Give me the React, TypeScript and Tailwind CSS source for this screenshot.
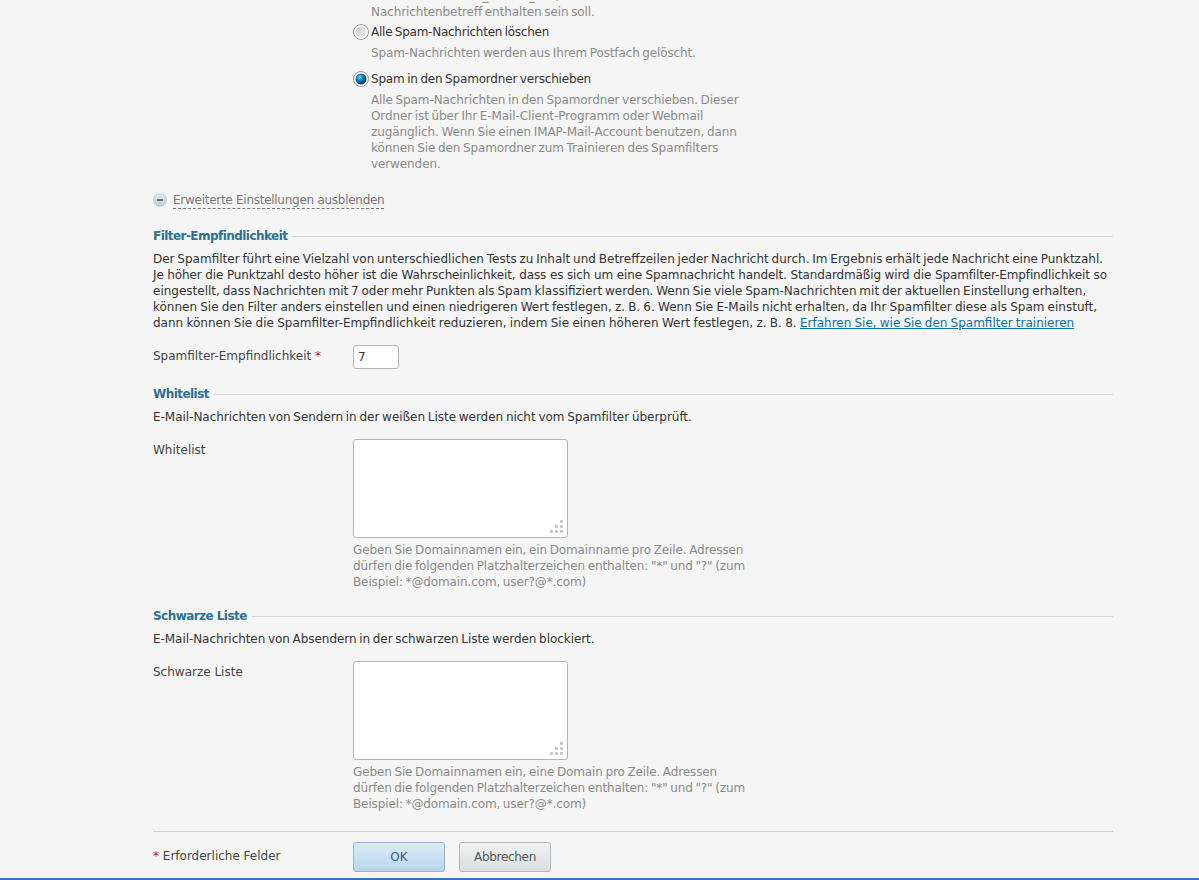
const font = { fontFamily: '"DejaVu Sans", sans-serif' };

function SectionTitle({ title }: { title: string }) {
  return (
    <div className="flex items-center gap-[5px] h-4">
      <span className="font-bold text-[#2f6f8f] tracking-[-0.55px]">{title}</span>
      <div className="flex-1 h-px bg-[#d8d8d8]" />
    </div>
  );
}

function ResizeGrip() {
  return (
    <svg className="absolute right-[2px] bottom-[2px]" width="16" height="16" viewBox="0 0 16 16" fill="#c4c4c4">
      <rect x="11" y="1" width="3" height="3" rx="1" />
      <rect x="6" y="6" width="3" height="3" rx="1" />
      <rect x="11" y="6" width="3" height="3" rx="1" />
      <rect x="1" y="11" width="3" height="3" rx="1" />
      <rect x="6" y="11" width="3" height="3" rx="1" />
      <rect x="11" y="11" width="3" height="3" rx="1" />
    </svg>
  );
}

function RadioIcon({ checked }: { checked: boolean }) {
  return (
    <svg className="mr-[2px] shrink-0" width="16" height="16" viewBox="0 0 16 16">
      <defs>
        <linearGradient id="radio-off" x1="0" y1="0" x2="1" y2="1">
          <stop offset="0" stopColor="#c9c9c9" />
          <stop offset="1" stopColor="#f4f4f4" />
        </linearGradient>
        <radialGradient id="radio-on" cx="0.4" cy="0.35" r="0.7">
          <stop offset="0" stopColor="#7fd0f5" />
          <stop offset="0.45" stopColor="#0f79b5" />
          <stop offset="1" stopColor="#06304d" />
        </radialGradient>
      </defs>
      <circle cx="8" cy="8" r="7.5" fill="#fff" stroke="#9a9a9a" />
      {checked ? <circle cx="8" cy="8" r="5.5" fill="url(#radio-on)" /> : <circle cx="8" cy="8" r="5.5" fill="url(#radio-off)" />}
    </svg>
  );
}

function ListField({ label, hint }: { label: string; hint: React.ReactNode }) {
  return (
    <div className="flex mt-[14px]">
      <div className="w-[200px] pt-[3px] text-[#444]">{label}</div>
      <div>
        <div className="relative w-[215px] h-[99px] bg-white border border-[#b5b5b5] rounded-[3px]">
          <ResizeGrip />
        </div>
        <p className="mt-[4px] text-[#8a8a8a] whitespace-nowrap tracking-[-0.12px] [word-spacing:-1px]">{hint}</p>
      </div>
    </div>
  );
}

export default function App() {
  return (
    <div style={font} className="h-[880px] overflow-hidden bg-[#f5f5f5] text-xs leading-4 text-[#333] flex flex-col">
      <div className="flex-1 min-h-0 pl-[153px] pr-[86px] pt-[4px]">
        <div className="pl-[200px]">
          <p className="pl-[18px] -mt-[16px] text-[#8a8a8a] whitespace-nowrap tracking-[-0.1px] [word-spacing:-1px]">
            Makros: Geben Sie _SCORE_ ein, wenn die Punktzahl im<br />
            Nachrichtenbetreff enthalten sein soll.
          </p>

          <label className="flex items-center h-4 mt-[4px]">
            <RadioIcon checked={false} />
            <span className="tracking-[-0.25px] [word-spacing:-1px]">Alle Spam-Nachrichten löschen</span>
          </label>
          <p className="pl-[18px] mt-[5px] text-[#8a8a8a] tracking-[-0.13px] [word-spacing:-1px]">Spam-Nachrichten werden aus Ihrem Postfach gelöscht.</p>

          <label className="flex items-center h-4 mt-[10px]">
            <RadioIcon checked />
            <span className="tracking-[-0.18px] [word-spacing:-1px]">Spam in den Spamordner verschieben</span>
          </label>
          <p className="pl-[18px] mt-[5px] text-[#8a8a8a] whitespace-nowrap tracking-[-0.1px] [word-spacing:-1px]">
            Alle Spam-Nachrichten in den Spamordner verschieben. Dieser<br />
            Ordner ist über Ihr E-Mail-Client-Programm oder Webmail<br />
            zugänglich. Wenn Sie einen IMAP-Mail-Account benutzen, dann<br />
            können Sie den Spamordner zum Trainieren des Spamfilters<br />
            verwenden.
          </p>
        </div>

        <div className="flex items-center mt-[20px] h-4">
          <svg className="mr-[6px] shrink-0" width="14" height="14" viewBox="0 0 14 14">
            <defs>
              <linearGradient id="toggle-fill" x1="0" y1="0" x2="0" y2="1">
                <stop offset="0" stopColor="#e4ebef" />
                <stop offset="1" stopColor="#bccad3" />
              </linearGradient>
            </defs>
            <circle cx="7" cy="7" r="6.5" fill="url(#toggle-fill)" stroke="#c3ced5" />
            <rect x="4" y="6" width="6" height="2" fill="#5f6f7a" />
          </svg>
          <span className="text-[#777] border-b border-dashed border-[#777] tracking-[-0.27px]">Erweiterte Einstellungen ausblenden</span>
        </div>

        <div className="mt-[20px]">
          <SectionTitle title="Filter-Empfindlichkeit" />
        </div>
        <p className="mt-[7px] whitespace-nowrap">
          <span className="[word-spacing:-1px]">Der Spamfilter führt eine Vielzahl von unterschiedlichen Tests zu Inhalt und Betreffzeilen jeder Nachricht durch. Im Ergebnis erhält jede Nachricht eine Punktzahl.</span><br />
          <span className="tracking-[-0.125px]">Je höher die Punktzahl desto höher ist die Wahrscheinlichkeit, dass es sich um eine Spamnachricht handelt. Standardmäßig wird die Spamfilter-Empfindlichkeit so</span><br />
          <span className="[word-spacing:-1px]">eingestellt, dass Nachrichten mit 7 oder mehr Punkten als Spam klassifiziert werden. Wenn Sie viele Spam-Nachrichten mit der aktuellen Einstellung erhalten,</span><br />
          <span className="[word-spacing:-0.65px]">können Sie den Filter anders einstellen und einen niedrigeren Wert festlegen, z. B. 6. Wenn Sie E-Mails nicht erhalten, da Ihr Spamfilter diese als Spam einstuft,</span><br />
          <span className="[word-spacing:-0.5px]">dann können Sie die Spamfilter-Empfindlichkeit reduzieren, indem Sie einen höheren Wert festlegen, z. B. 8. </span>
          <a className="text-[#0f6fa8] underline [word-spacing:-0.7px]">Erfahren Sie, wie Sie den Spamfilter trainieren</a>
        </p>

        <div className="flex mt-[14px]">
          <div className="w-[200px] pt-[3px] text-[#444]">
            Spamfilter-Empfindlichkeit <span className="text-[#b01c2e]">*</span>
          </div>
          <div className="w-[46px] h-6 bg-white border border-[#b5b5b5] rounded-[3px] pl-[4px] leading-[22px]">7</div>
        </div>

        <div className="mt-[17px]">
          <SectionTitle title="Whitelist" />
        </div>
        <p className="mt-[7px] tracking-[-0.03px] [word-spacing:-1px]">E-Mail-Nachrichten von Sendern in der weißen Liste werden nicht vom Spamfilter überprüft.</p>
        <ListField
          label="Whitelist"
          hint={
            <>
              Geben Sie Domainnamen ein, ein Domainname pro Zeile. Adressen<br />
              dürfen die folgenden Platzhalterzeichen enthalten: "*" und "?" (zum<br />
              Beispiel: *@domain.com, user?@*.com)
            </>
          }
        />

        <div className="mt-[18px]">
          <SectionTitle title="Schwarze Liste" />
        </div>
        <p className="mt-[7px] tracking-[-0.06px] [word-spacing:-1px]">E-Mail-Nachrichten von Absendern in der schwarzen Liste werden blockiert.</p>
        <ListField
          label="Schwarze Liste"
          hint={
            <>
              Geben Sie Domainnamen ein, eine Domain pro Zeile. Adressen<br />
              dürfen die folgenden Platzhalterzeichen enthalten: "*" und "?" (zum<br />
              Beispiel: *@domain.com, user?@*.com)
            </>
          }
        />

        <div className="mt-[19px] border-t border-[#cfcfcf] flex pt-[10px]">
          <div className="w-[200px] pt-[6px] text-[#444]">
            <span className="text-[#b01c2e]">*</span> Erforderliche Felder
          </div>
          <button className="w-[92px] h-[30px] mr-[14px] rounded-[3px] border border-[#8fb4d6] bg-gradient-to-b from-[#dcebf7] to-[#b9d5ec] text-[#2f5f80]">OK</button>
          <button className="w-[92px] h-[30px] rounded-[3px] border border-[#b0b8bd] bg-gradient-to-b from-[#f0f2f3] to-[#d9dfe2] text-[#555] tracking-[-0.3px]">Abbrechen</button>
        </div>
      </div>
      <div className="h-[2px] bg-[#3a74c0]" />
    </div>
  );
}
